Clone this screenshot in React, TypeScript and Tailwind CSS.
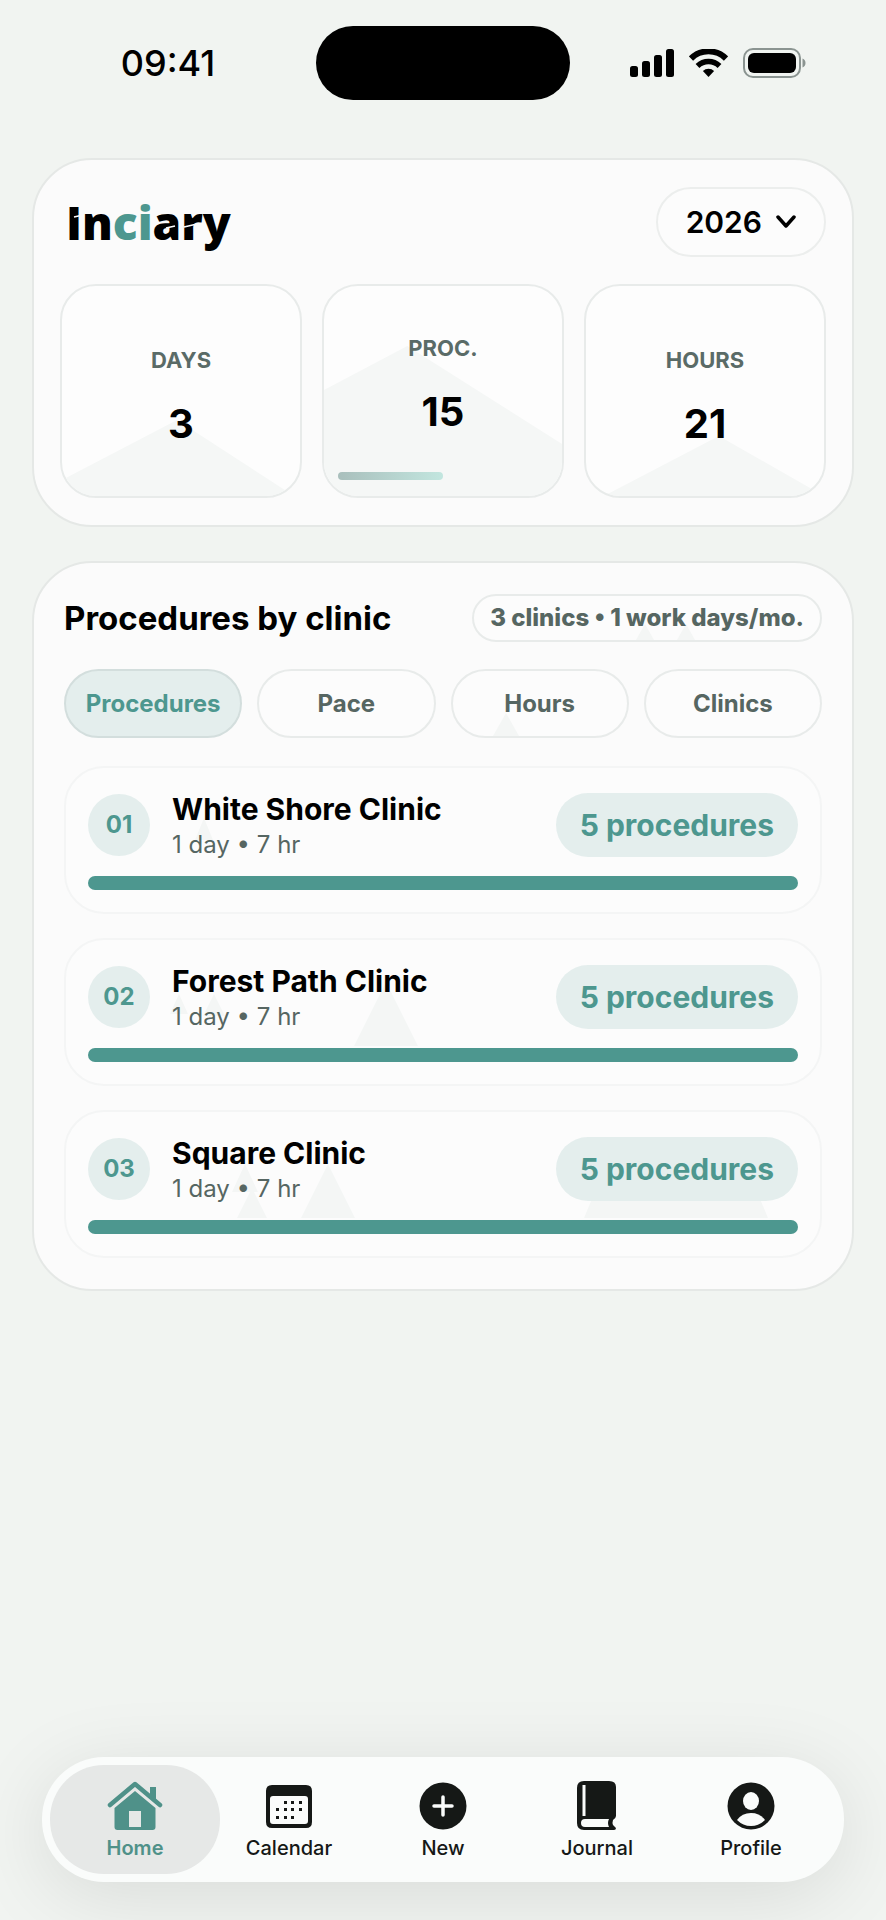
import type { ReactNode } from "react";

const clinics = [
  { id: "01", name: "White Shore Clinic", meta: "1 day • 7 hr", count: "5 procedures", share: 100, hills: "M138 50l9 22h-18z" },
  { id: "02", name: "Forest Path Clinic", meta: "1 day • 7 hr", count: "5 procedures", share: 100, hills: "M113 54l9 20h-18zM148 54l11 22h-22zM320 42l32 64h-64z" },
  { id: "03", name: "Square Clinic", meta: "1 day • 7 hr", count: "5 procedures", share: 100, hills: "M179 52l13 28h-26zM186 76l15 30h-30zM262 52l27 54h-54zM528 82h164l10 24H518z" },
];

const tabs = ["Procedures", "Pace", "Hours", "Clinics"];

function StatusBar() {
  return (
    <header className="grid grid-cols-[1fr_254px_1fr] items-center pt-[26px] text-black">
      <span className="justify-self-center pl-5 text-[36px] leading-none font-medium">09:41</span>
      <div className="h-[74px] rounded-[37px] bg-black" />
      <div className="flex items-center gap-[15px] justify-self-center pr-5">
        <svg width="44" height="28" viewBox="0 0 44 28" fill="currentColor" aria-hidden="true">
          <rect x="0" y="17" width="8" height="11" rx="2.5" />
          <rect x="12" y="12" width="8" height="16" rx="2.5" />
          <rect x="24" y="6" width="8" height="22" rx="2.5" />
          <rect x="36" y="0" width="8" height="28" rx="2.5" />
        </svg>
        <svg width="39" height="28" viewBox="0 0 39 28" fill="none" aria-hidden="true">
          <path d="M2 9.500a25 25 0 0 1 35 0" stroke="currentColor" strokeWidth="6" />
          <path d="M8.500 17a16 16 0 0 1 22 0" stroke="currentColor" strokeWidth="5.5" />
          <path d="M19.500 28l-5.600-6a8 8 0 0 1 11.200 0z" fill="currentColor" />
        </svg>
        <svg width="63" height="30" viewBox="0 0 63 30" aria-hidden="true">
          <rect x="1" y="1" width="56" height="28" rx="9" fill="none" stroke="#8b9491" strokeWidth="2" />
          <rect x="5" y="5" width="48" height="20" rx="6" fill="currentColor" />
          <path d="M59.500 10.500c4 1.500 4 7.500 0 9z" fill="#8b9491" />
        </svg>
      </div>
    </header>
  );
}

function Logo() {
  return (
    <h1 className="relative pl-1.5 font-['Open_Sans',sans-serif] text-[46px] leading-[52px] font-extrabold text-black">
      In<span className="text-[#4d978f]">ci</span>ary
      {/* cuts through the letters */}
      <svg className="absolute inset-0" width="180" height="52" viewBox="0 0 180 52" fill="none" stroke="#fbfbfb" strokeWidth="1.5" aria-hidden="true">
        <path d="M14 21l9-2M106 32l9-2M124 31l13-3" />
      </svg>
    </h1>
  );
}

function StatCard({ label, value, hill, progress }: { label: string; value: string; hill: string; progress?: number }) {
  return (
    <div
      className={
        progress === undefined
          ? "relative h-[214px] overflow-hidden rounded-[36px] border-2 border-[#e8ebea] bg-[#fdfdfd] px-3.5 pt-15 text-center"
          : "relative h-[214px] overflow-hidden rounded-[36px] border-2 border-[#e8ebea] bg-[#fdfdfd] px-3.5 pt-12 text-center"
      }
    >
      <svg className="absolute inset-0 h-full w-full" viewBox="0 0 240 210" preserveAspectRatio="none" aria-hidden="true">
        <path d={hill} fill="#f5f7f6" />
      </svg>
      <p className="relative text-[22px] leading-7 font-bold text-[#5a6b67]">{label}</p>
      <p className="relative mt-[26px] text-[40px] leading-[48px] font-bold text-black">{value}</p>
      {progress !== undefined && (
        <div className="relative mt-9 h-2">
          <div className="h-full rounded-full bg-linear-to-r from-[#a9bfbc] to-[#c2e6df]" style={{ width: `${progress}%` }} />
        </div>
      )}
    </div>
  );
}

function NavItem({ label, active, children }: { label: string; active?: boolean; children: ReactNode }) {
  return (
    <a
      href={`#${label.toLowerCase()}`}
      className={
        active
          ? "-mx-2 flex h-[109px] flex-col items-center justify-center gap-0.5 rounded-[54px] bg-[#e6e8e7] pt-0.5 font-semibold text-[#4f9189]"
          : "flex h-[109px] flex-col items-center justify-center gap-0.5 pt-0.5 font-medium text-[#151816]"
      }
    >
      <svg width="56" height="52" viewBox="0 0 56 52" fill="currentColor" aria-hidden="true">
        {children}
      </svg>
      <span className="text-[20px] leading-7">{label}</span>
    </a>
  );
}

export default function App() {
  return (
    <div className="flex min-h-screen flex-col bg-[#f1f4f1] font-[Inter,sans-serif]">
      <StatusBar />

      <main className="mt-[58px] flex flex-1 flex-col gap-[34px] px-8">
        <section className="rounded-[60px] border-2 border-[#e5e8e6] bg-[#fbfbfb] px-[26px] py-[27px]">
          <div className="flex items-center justify-between">
            <Logo />
            <button className="flex h-[70px] items-center gap-3.5 rounded-full border-2 border-[#eceeed] bg-[#fcfcfc] px-7 text-[30px] font-semibold text-black">
              2026
              <svg width="20" height="14" viewBox="0 0 20 14" fill="none" stroke="currentColor" strokeWidth="3.5" strokeLinecap="round" strokeLinejoin="round" aria-hidden="true">
                <path d="M2 2l8 9 8-9" />
              </svg>
            </button>
          </div>
          <div className="mt-[27px] grid grid-cols-3 gap-5">
            <StatCard label="DAYS" value="3" hill="M0 194L116 134 234 210H0z" />
            <StatCard label="PROC." value="15" hill="M0 104L84 60 240 158V210H0z" progress={50} />
            <StatCard label="HOURS" value="21" hill="M18 210L134 150 240 210z" />
          </div>
        </section>

        <section className="rounded-[60px] border-2 border-[#e5e8e6] bg-[#fbfbfb] px-[30px] py-[31px]">
          <div className="flex items-center justify-between">
            <h2 className="text-[33px] leading-[48px] font-bold text-black">Procedures by clinic</h2>
            <div className="relative flex h-12 items-center rounded-full border-2 border-[#e8ebea] bg-[#fcfcfc] px-4">
              <svg className="absolute right-31 bottom-0" width="60" height="16" viewBox="0 0 60 16" fill="#f4f6f5" aria-hidden="true">
                <path d="M9 0l9 16H0zM50 0l9 16H41z" />
              </svg>
              <span className="relative text-[24px] font-extrabold text-[#566662]">3 clinics • 1 work days/mo.</span>
            </div>
          </div>

          <div className="mt-[27px] grid grid-cols-4 gap-[15px]">
            {tabs.map((tab, i) => (
              <button
                key={tab}
                className={
                  i === 0
                    ? "h-[69px] rounded-full border-2 border-[#d3dedd] bg-[#e4eeed] text-[24px] font-bold text-[#4d978f]"
                    : "relative h-[69px] rounded-full border-2 border-[#e8ebea] bg-[#fcfcfc] text-[24px] font-bold text-[#566662]"
                }
              >
                {tab === "Hours" && (
                  <svg className="absolute bottom-0 left-10" width="26" height="23" viewBox="0 0 26 23" fill="#f4f6f5" aria-hidden="true">
                    <path d="M13 0l13 23H0z" />
                  </svg>
                )}
                <span className="relative">{tab}</span>
              </button>
            ))}
          </div>

          <ul className="mt-7 flex flex-col gap-6">
            {clinics.map((c) => (
              <li key={c.id} className="relative rounded-[40px] border-2 border-[#f4f5f5] bg-[#fcfcfc] px-[22px] pt-[21px] pb-[22px]">
                <svg className="absolute top-0 left-0" width="740" height="144" viewBox="0 0 740 144" fill="#f4f6f5" aria-hidden="true">
                  <path d={c.hills} />
                </svg>
                <div className="relative flex items-center">
                  <span className="flex size-[62px] items-center justify-center rounded-full bg-[#e4eeed] text-[24px] font-bold text-[#4d978f]">
                    {c.id}
                  </span>
                  <div className="ml-[22px] flex-1">
                    <h3 className="text-[30px] leading-10 font-bold text-black">{c.name}</h3>
                    <p className="text-[24px] leading-8 text-[#566662]">{c.meta}</p>
                  </div>
                  <span className="flex h-16 items-center rounded-full bg-[#e4eeed] px-6 text-[30px] font-bold text-[#4d978f]">
                    {c.count}
                  </span>
                </div>
                <div className="relative mt-[15px] h-3.5">
                  <div className="h-full rounded-full bg-[#4d978f]" style={{ width: `${c.share}%` }} />
                </div>
              </li>
            ))}
          </ul>
        </section>
      </main>

      <nav className="mx-[42px] mb-[38px] grid grid-cols-5 rounded-[62px] bg-[#fafcfb] px-4 py-2 shadow-[0_14px_80px_rgba(0,0,0,0.10)]">
        <NavItem label="Home" active>
          <path d="M3 25L28 4l25 21" fill="none" stroke="currentColor" strokeWidth="4.5" strokeLinecap="round" strokeLinejoin="round" />
          <path d="M43 7h6v14l-6-5z" />
          <path fillRule="evenodd" d="M28 11L7.500 28v19q0 3 3 3h35q3 0 3-3V28zM22 31h12v16H22z" />
        </NavItem>
        <NavItem label="Calendar">
          <path fillRule="evenodd" d="M11 5h34q6 0 6 6v31q0 6-6 6H11q-6 0-6-6V11q0-6 6-6zM12 16q-3 0-3 3v22q0 3 3 3h32q3 0 3-3V19q0-3-3-3z" />
          <path d="M23 21h3v3h-3zM30 21h3v3h-3zM38 21h3v3h-3zM15 28h3v3h-3zM23 28h3v3h-3zM30 28h3v3h-3zM38 28h3v3h-3zM15 36h3v3h-3zM23 36h3v3h-3zM30 36h3v3h-3z" />
        </NavItem>
        <NavItem label="New">
          <circle cx="28" cy="26" r="23.500" />
          <path d="M28 17v18M19 26h18" stroke="#fafcfb" strokeWidth="3.500" strokeLinecap="round" />
        </NavItem>
        <NavItem label="Journal">
          <path fillRule="evenodd" d="M15 1h25q7 0 7 6v29q0 2-3 4-1 3 0 5l3 3q0 2-2 2H15q-7 0-7-7V8q0-7 7-7zM13.500 5v31h3V5zM16 39q-4 0-4 4t4 4h24q-2-4 0-8z" />
        </NavItem>
        <NavItem label="Profile">
          <circle cx="28" cy="26" r="23.500" />
          <ellipse cx="28" cy="21" rx="8" ry="9" fill="#fafcfb" />
          <path d="M14 40q5-7 14-7t14 7q-6 6-14 6t-14-6z" fill="#fafcfb" />
        </NavItem>
      </nav>
    </div>
  );
}
